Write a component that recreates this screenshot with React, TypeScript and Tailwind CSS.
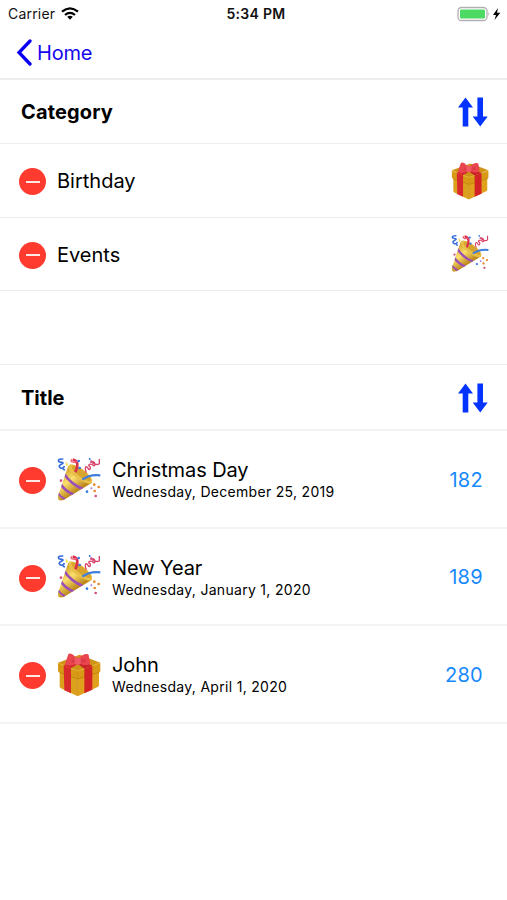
import { useState } from 'react'

type CategoryName = 'Birthday' | 'Events'

interface EventItem {
  title: string
  date: string
  days: number
  category: CategoryName
}

const initialCategories: CategoryName[] = ['Birthday', 'Events']

const initialEvents: EventItem[] = [
  { title: 'Christmas Day', date: 'Wednesday, December 25, 2019', days: 182, category: 'Events' },
  { title: 'New Year', date: 'Wednesday, January 1, 2020', days: 189, category: 'Events' },
  { title: 'John', date: 'Wednesday, April 1, 2020', days: 280, category: 'Birthday' },
]

const GiftIcon = ({ className }: { className: string }) => (
  <svg viewBox="0 0 132 132" className={className}>
    <path d="M8 46 62 68V130L12 106Q8 104 8 100Z" fill="#dba01c" />
    <path d="M62 68 126 46V96Q126 100 122 102L62 130Z" fill="#e0a21c" />
    <path d="M3 30 62 54 130 30V54Q130 57 127 58L62 78 7 58Q3 56 3 53Z" fill="#d89a14" />
    <path d="M3 29 68 5 130 29 62 54Z" fill="#cf9317" />
    <path d="M4 30 62 54 129 30" fill="none" stroke="#e3b02e" strokeWidth="3" />
    <path d="M62 55V128" stroke="#c98b12" strokeWidth="2" />
    <path d="M7 58 62 78 127 58" fill="none" stroke="#b27a0e" strokeWidth="2" />
    <path d="M20 37 42 46V121L22 112Z" fill="#d92a2b" />
    <path d="M82 47 106 38V110L82 121Z" fill="#d32327" />
    <path d="M20 37 50 24 66 31 42 46Z" fill="#d6292f" />
    <path d="M106 38 78 24 60 31 82 47Z" fill="#cb2229" />
    <path d="M58 16C51 4 36-2 34 4L25 29C23 37 33 38 43 37L58 33Z" fill="#ea4650" />
    <path d="M67 15C76 3 93 0 95 7L99 26C100 36 90 37 80 36L67 32Z" fill="#ea4650" />
    <path d="M56 22 45 18 43 29 56 29ZM70 21 84 17 86 28 70 28Z" fill="#dc3a46" />
    <rect x="53" y="13" width="18" height="22" rx="6" fill="#f05a65" />
  </svg>
)

const PartyIcon = ({ className }: { className: string }) => (
  <svg viewBox="0 0 132 132" className={className}>
    <defs>
      <linearGradient id="cone" x1="20" y1="40" x2="62" y2="98" gradientUnits="userSpaceOnUse">
        <stop offset="0" stopColor="#d5a22b" />
        <stop offset="0.45" stopColor="#fae06d" />
        <stop offset="1" stopColor="#bd8619" />
      </linearGradient>
      <clipPath id="cone-shape">
        <path d="M34 23 105 74 20 126Q3 132 2 116Z" />
      </clipPath>
    </defs>
    <g clipPath="url(#cone-shape)">
      <rect width="132" height="132" fill="url(#cone)" />
      <path d="M20 46Q42 80 78 93" fill="none" stroke="#9c50b6" strokeWidth="8" />
      <path d="M10 76Q22 98 50 110" fill="none" stroke="#9c50b6" strokeWidth="8" />
      <path d="M2 103Q9 117 24 123" fill="none" stroke="#9c50b6" strokeWidth="6" />
    </g>
    <ellipse cx="70" cy="48" rx="43" ry="16" transform="rotate(37 70 48)" fill="#e9c04a" />
    <ellipse cx="73" cy="46" rx="36" ry="10" transform="rotate(37 73 46)" fill="#d7a42e" />
    <path d="M47 5C64 8 64 22 55 43" fill="none" stroke="#d9304d" strokeWidth="8" />
    <path d="M45 4C36 10 50 17 61 9" fill="none" stroke="#ee6076" strokeWidth="4" />
    <path d="M76 65Q98 48 130 52" fill="none" stroke="#3f7edb" strokeWidth="7" />
    <path d="M19 3C-2 2 2 12 15 13C26 16 3 20 7 26C13 35 21 29 22 24M17 33 24 36" fill="none" stroke="#386edb" strokeWidth="5" />
    <path d="M88 44C80 22 91 23 94 33C99 39 104 26 96 24C92 17 106 16 109 23C119 26 112 7 106 12C107 20 130 23 127 14L127 3" fill="none" stroke="#d84268" strokeWidth="4" />
    <path d="M26 10 34 20 27 24Z" fill="#f3de45" />
    <g fill="#3679e8">
      <circle cx="65" cy="9" r="4" />
      <circle cx="68" cy="30" r="4" />
      <circle cx="90" cy="101" r="4" />
      <circle cx="98" cy="3" r="3" />
    </g>
    <g fill="#e68b2d">
      <circle cx="112" cy="80" r="4" />
      <circle cx="113" cy="99" r="4" />
      <circle cx="125" cy="87" r="4" />
    </g>
    <g fill="#d14f81">
      <circle cx="12" cy="68" r="4" />
      <circle cx="103" cy="11" r="4" />
      <circle cx="116" cy="114" r="4" />
    </g>
    <circle cx="103" cy="91" r="3" fill="#a67bdd" />
  </svg>
)

const CategoryIcon = ({ name, className }: { name: CategoryName; className: string }) =>
  name === 'Birthday' ? <GiftIcon className={className} /> : <PartyIcon className={className} />

const DeleteButton = ({ onClick }: { onClick: () => void }) => (
  <button
    type="button"
    onClick={onClick}
    className="ml-[19px] flex size-[27px] shrink-0 items-center justify-center rounded-full bg-[#ff3b30]"
  >
    <span className="h-[2px] w-[14px] bg-[#ffe9e7]" />
  </button>
)

const SortButton = ({ onClick }: { onClick: () => void }) => (
  <button type="button" onClick={onClick} className="mr-[19px]">
    <svg viewBox="0 0 30 30" className="block size-[30px]" fill="#0433ff">
      <path d="M7.500 .5 15 10.500H10.300V29.500H4.700V10.500H0Z" />
      <path d="M22.200 29.500 14.700 19.500H19.400V.500H25V19.500H29.700Z" />
    </svg>
  </button>
)

const StatusBar = () => (
  <div className="grid h-[27px] grid-cols-3 items-center text-[14px] text-[#111]">
    <div className="flex items-center pl-2">
      <span className="tracking-[0.2px]">Carrier</span>
      <svg viewBox="0 0 18 13" className="ml-[6px] h-[13px] w-[18px]" fill="none" stroke="#000" strokeWidth="2.300">
        <path d="M1 4.700Q9-2 17 4.700" />
        <path d="M4 8Q9 3.700 14 8" />
        <path d="M6.200 9.800Q9 7.700 11.800 9.800L9 12.700Z" fill="#000" stroke="none" />
      </svg>
    </div>
    <span className="pl-[5px] text-center font-semibold tracking-[0.3px]">5:34 PM</span>
    <div className="flex items-center justify-end pr-[5px]">
      <svg viewBox="0 0 45 16" className="h-4 w-[45px]">
        <rect x="1" y="1.500" width="29" height="13" rx="3.500" fill="#fff" stroke="#b0b0b0" strokeWidth="1.300" />
        <rect x="3" y="3.500" width="25" height="9" rx="1.300" fill="#4cd964" />
        <path d="M31.300 5.800Q33 8 31.300 10.200Z" fill="#aaa" />
        <path d="M41 2 36 9H39L37.500 14 43.300 6.800H40Z" fill="#000" />
      </svg>
    </div>
  </div>
)

export default function App() {
  const [categories, setCategories] = useState(initialCategories)
  const [events, setEvents] = useState(initialEvents)

  return (
    <div className="min-h-screen bg-white font-['Inter','Liberation_Sans',sans-serif] text-black">
      <StatusBar />

      <nav className="flex h-[53px] items-center border-b-2 border-[#ededed] pl-4">
        <button type="button" className="flex items-center text-[20px] text-[#1307ed]">
          <svg viewBox="0 0 16 27" className="mr-[5px] h-[27px] w-4">
            <path d="M14 2 3 13.500 14 25" fill="none" stroke="#0b00f2" strokeWidth="3.300" strokeLinecap="round" />
          </svg>
          <span className="tracking-[-0.2px]">Home</span>
        </button>
      </nav>

      {/* Categories */}
      <section>
        <div className="flex h-16 items-center justify-between border-b border-[#efefef]">
          <h2 className="pl-[21px] text-[20px] font-bold tracking-[0.15px]">Category</h2>
          <SortButton onClick={() => setCategories([...categories].reverse())} />
        </div>
        {categories.map((name) => (
          <div key={name} className="flex h-[73.500px] items-center border-b border-[#ebebeb] pt-[3px]">
            <DeleteButton onClick={() => setCategories(categories.filter((c) => c !== name))} />
            <span className="ml-[11px] flex-1 pb-[1px] text-[20px]">{name}</span>
            <CategoryIcon name={name} className="mr-[18px] size-[38px] -translate-y-[1px]" />
          </div>
        ))}
      </section>

      {/* Events */}
      <section className="mt-[73px] border-t border-[#efefef]">
        <div className="flex h-[66px] items-center justify-between border-b-2 border-[#f3f3f3] pt-[2px]">
          <h2 className="pl-[21px] text-[20px] font-bold">Title</h2>
          <SortButton onClick={() => setEvents([...events].reverse())} />
        </div>
        {events.map((event) => (
          <div key={event.title} className="flex h-[97.500px] items-center border-b-2 border-[#f3f3f3] pt-1">
            <DeleteButton onClick={() => setEvents(events.filter((e) => e !== event))} />
            <CategoryIcon name={event.category} className="ml-[11px] size-[44px] -translate-y-[1px]" />
            <div className="ml-[11px] flex-1 pb-[1px]">
              <div className="text-[20px] leading-6 tracking-[-0.1px]">{event.title}</div>
              <div className="text-[14px] leading-5 tracking-[0.3px]">{event.date}</div>
            </div>
            <span className="mr-6 pb-[2px] text-[20px] tracking-[0.3px] text-[#1689fb]">{event.days}</span>
          </div>
        ))}
      </section>
    </div>
  )
}
